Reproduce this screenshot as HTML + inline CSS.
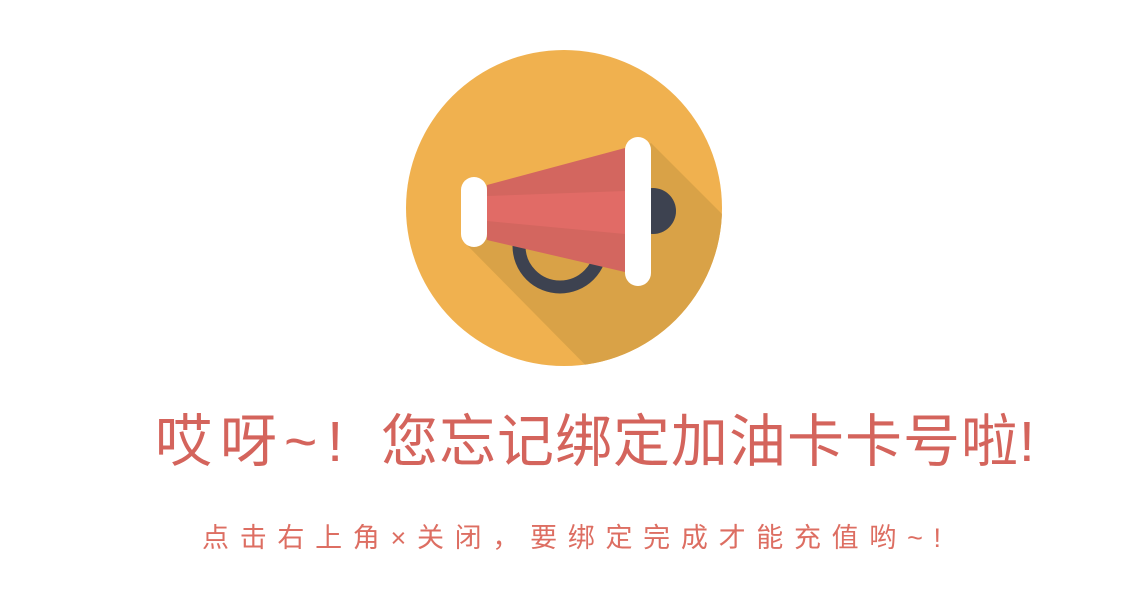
<!DOCTYPE html>
<html><head><meta charset="utf-8"><style>
html,body{margin:0;padding:0;background:#fff;width:1143px;height:601px;overflow:hidden;position:relative}
.t{position:absolute;white-space:nowrap;color:#d4645c;font-family:"Liberation Sans","Noto Sans CJK SC",sans-serif;font-weight:400;font-size:57px;line-height:80px;top:402px}
#t2{left:202px;top:518px;font-size:27px;letter-spacing:10.7px;line-height:40px;color:#dd6e62}
</style></head><body>
<svg width="1143" height="601" style="position:absolute;left:0;top:0">
<defs><clipPath id="c"><circle cx="564" cy="208" r="158"/></clipPath></defs>
<circle cx="564" cy="208" r="158" fill="#f0b14f"/>
<g clip-path="url(#c)">
<polygon points="462,240 651,143 950,442 760,542" fill="#d9a247"/>
</g>
<circle cx="653" cy="211" r="23" fill="#3d4250"/>
<circle cx="560" cy="246" r="41" fill="none" stroke="#3d4250" stroke-width="13"/>
<polygon points="487,185 625,148 625,272 487,240" fill="#d3665f"/>
<polygon points="487,196 625,191 625,234 487,221" fill="#e16b66"/>
<rect x="461" y="177" width="26" height="70" rx="13" fill="#fff"/>
<rect x="625" y="137" width="26" height="149" rx="13" fill="#fff"/>
</svg>
<div class="t" style="left:155px;letter-spacing:8px">哎呀</div>
<div class="t" style="left:284px;letter-spacing:10px">~!</div>
<div class="t" style="left:381px;letter-spacing:1px">您忘记绑定加油卡卡号啦!</div>
<div class="t" id="t2">点击右上角×关闭，要绑定完成才能充值哟~!</div>
</body></html>
